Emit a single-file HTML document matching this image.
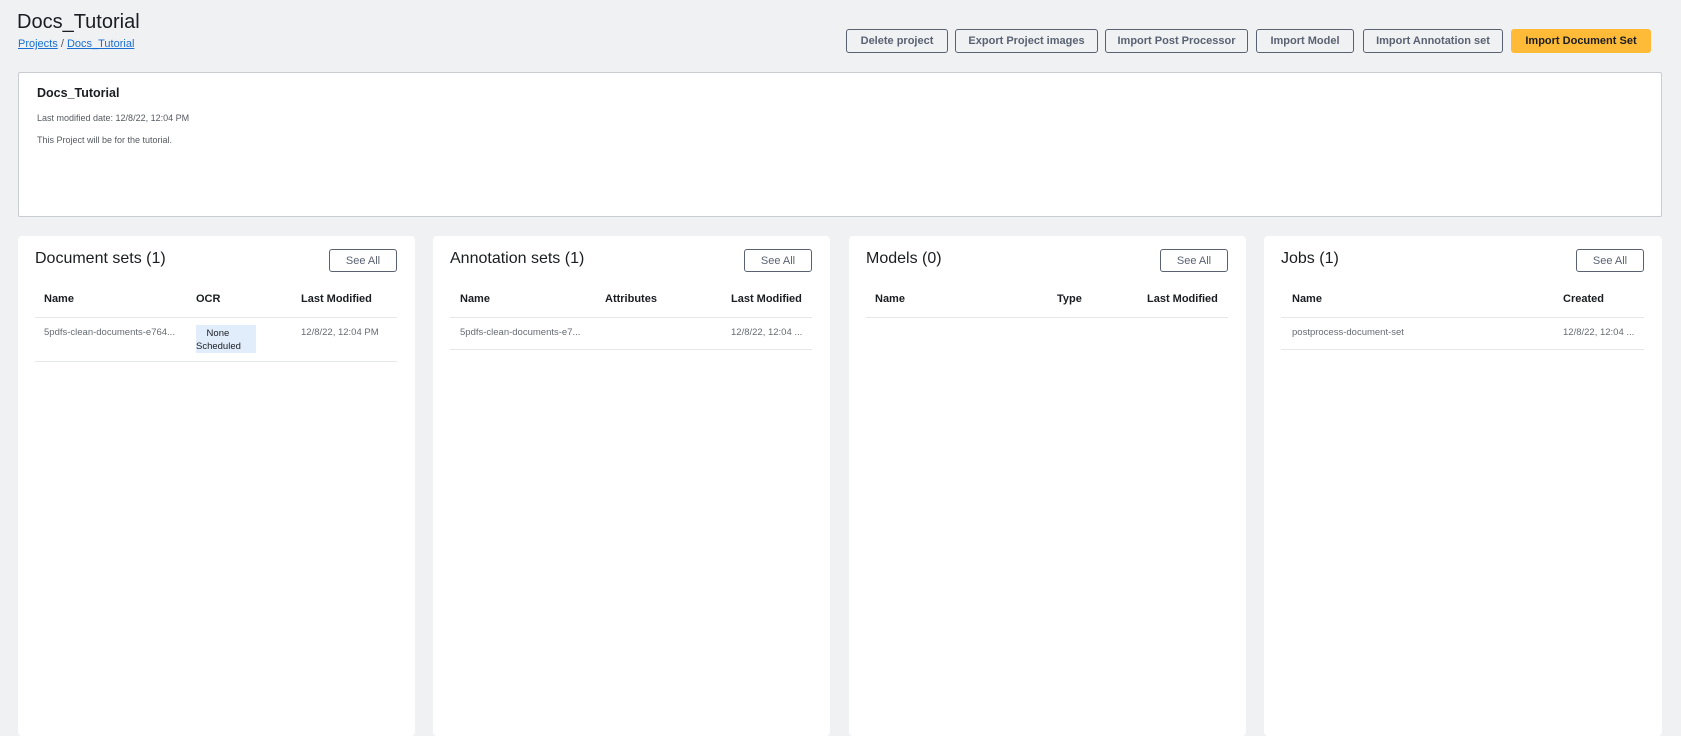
<!DOCTYPE html>
<html><head><style>
*{box-sizing:border-box;margin:0;padding:0}
body{width:1681px;height:719px;overflow:hidden;background:#f0f1f3;font-family:"Liberation Sans",sans-serif;color:#1a1d21;position:relative}
.a{position:absolute;white-space:nowrap}
.btn{position:absolute;top:29px;height:24px;border:1px solid #5a6272;border-radius:3px;font-size:11px;font-weight:bold;color:#5a6272;display:flex;align-items:center;justify-content:center;background:#f0f1f3}
.card{position:absolute;background:#fff;border-radius:4px}
.see{position:absolute;top:13px;right:18px;width:68px;height:23px;border:1px solid #5a6272;border-radius:3px;font-size:11px;color:#5a6272;display:flex;align-items:center;justify-content:center}
.pt{position:absolute;left:17px;top:14px;font-size:16px;color:#1a1d21}
.th{position:absolute;top:57px;font-size:11px;font-weight:bold}
.hr{position:absolute;left:17px;right:18px;height:1px;background:#e6e7ea}
.td{position:absolute;top:91px;font-size:9.5px;color:#666b73}
</style></head><body>
<div class="a" style="left:17px;top:11px;font-size:20px">Docs_Tutorial</div>
<div class="a" style="left:18px;top:38px;font-size:11px;color:#1a6fd1"><u>Projects</u> <span style="color:#555">/</span> <u>Docs_Tutorial</u></div>

<div class="btn" style="left:846px;width:102px">Delete project</div>
<div class="btn" style="left:955px;width:143px">Export Project images</div>
<div class="btn" style="left:1105px;width:143px">Import Post Processor</div>
<div class="btn" style="left:1256px;width:98px">Import Model</div>
<div class="btn" style="left:1363px;width:140px">Import Annotation set</div>
<div class="btn" style="left:1511px;width:140px;background:#ffbb38;border-color:#ffbb38;color:#1a1d21">Import Document Set</div>

<div class="card" style="left:18px;top:72px;width:1644px;height:145px;border:1px solid #c9ccd1;border-radius:2px">
<div class="a" style="left:18px;top:13px;font-size:12.5px;font-weight:bold">Docs_Tutorial</div>
<div class="a" style="left:18px;top:40px;font-size:9px;color:#555a61">Last modified date: 12/8/22, 12:04 PM</div>
<div class="a" style="left:18px;top:62px;font-size:9px;color:#555a61">This Project will be for the tutorial.</div>
</div>

<div class="card" style="left:18px;top:236px;width:397px;height:500px">
<div class="pt">Document sets (1)</div><div class="see">See All</div>
<div class="th" style="left:26px">Name</div><div class="th" style="left:178px">OCR</div><div class="th" style="left:283px">Last Modified</div>
<div class="hr" style="top:81px"></div>
<div class="td" style="left:26px">5pdfs-clean-documents-e764...</div>
<div class="a" style="left:178px;top:89px;width:60px;height:28px;background:#e2edfb"></div>
<div class="a" style="left:178px;top:91px;font-size:9.5px;line-height:13px;color:#1a1d21">&nbsp;&nbsp;&nbsp;&nbsp;None<br>Scheduled</div>
<div class="td" style="left:283px">12/8/22, 12:04 PM</div>
<div class="hr" style="top:125px"></div>
</div>

<div class="card" style="left:433px;top:236px;width:397px;height:500px">
<div class="pt">Annotation sets (1)</div><div class="see">See All</div>
<div class="th" style="left:27px">Name</div><div class="th" style="left:172px">Attributes</div><div class="th" style="left:298px">Last Modified</div>
<div class="hr" style="top:81px"></div>
<div class="td" style="left:27px">5pdfs-clean-documents-e7...</div>
<div class="td" style="left:298px">12/8/22, 12:04 ...</div>
<div class="hr" style="top:113px"></div>
</div>

<div class="card" style="left:849px;top:236px;width:397px;height:500px">
<div class="pt">Models (0)</div><div class="see">See All</div>
<div class="th" style="left:26px">Name</div><div class="th" style="left:208px">Type</div><div class="th" style="left:298px">Last Modified</div>
<div class="hr" style="top:81px"></div>
</div>

<div class="card" style="left:1264px;top:236px;width:398px;height:500px">
<div class="pt">Jobs (1)</div><div class="see">See All</div>
<div class="th" style="left:28px">Name</div><div class="th" style="left:299px">Created</div>
<div class="hr" style="top:81px"></div>
<div class="td" style="left:28px">postprocess-document-set</div>
<div class="td" style="left:299px">12/8/22, 12:04 ...</div>
<div class="hr" style="top:113px"></div>
</div>
</body></html>
